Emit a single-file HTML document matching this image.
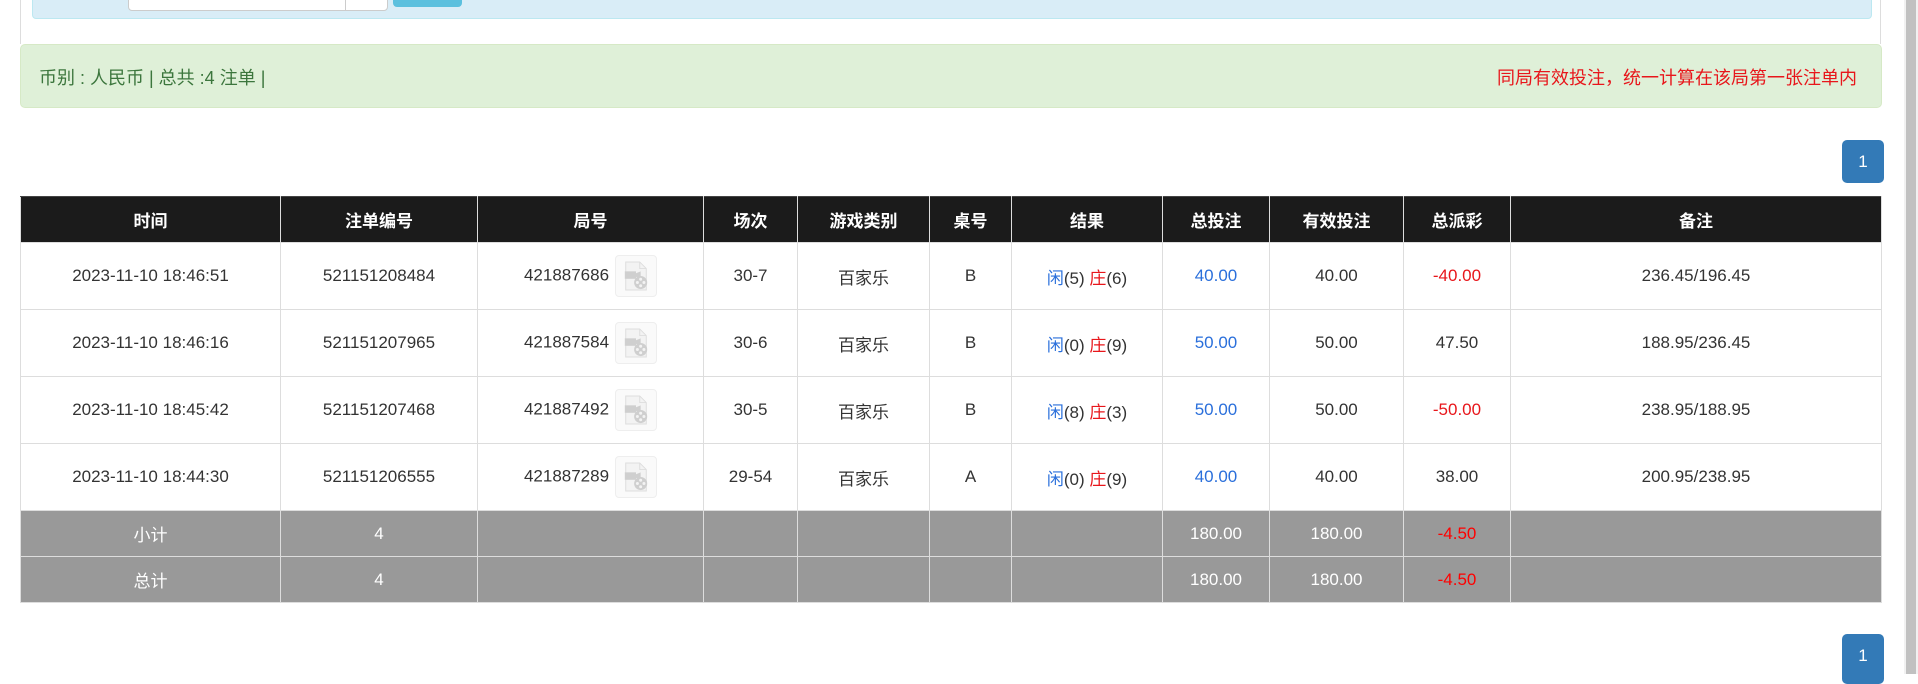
<!DOCTYPE html>
<html><head><meta charset="utf-8"><style>
body{margin:0;width:1918px;height:674px;overflow:hidden;background:#fff;font-family:"Liberation Sans","Noto Sans CJK SC",sans-serif;font-size:17px;color:#333;position:relative}
.abs{position:absolute}
table{position:absolute;left:20px;top:196px;width:1862px;border-collapse:collapse;table-layout:fixed}
td,th{border:1.5px solid #ddd;text-align:center;padding:0}
th{background:#1b1b1b;color:#fff;font-weight:bold;height:45px;border-color:#ddd;border-top:1px solid #444}
tr.r td{height:66px}
tr.s td{background:#999;color:#fff;height:45px;border-color:#ddd}
.b{color:#2a6fdb}.rd{color:#e8161b}
.ic{display:inline-block;width:42px;height:42px;border:1px solid #eee;border-radius:4px;vertical-align:middle;margin-left:6px;box-sizing:border-box;background:#fafafa}
.ic svg{display:block;margin:5px auto 0}
</style></head><body>
<div class="abs" style="left:20px;top:0;width:1px;height:44px;background:#ddd"></div>
<div class="abs" style="left:1880px;top:0;width:1px;height:44px;background:#ddd"></div>
<div class="abs" style="left:32px;top:-4px;width:1838px;height:21px;background:#d9edf7;border:1px solid #bce8f1;border-radius:4px"></div>
<div class="abs" style="left:128px;top:-4px;width:258px;height:13px;background:#fff;border:1px solid #ccc;border-radius:4px"></div>
<div class="abs" style="left:345px;top:-4px;width:1px;height:14px;background:#ccc"></div>
<div class="abs" style="left:393px;top:-4px;width:69px;height:11px;background:#5bc0de;border-radius:4px"></div>
<div class="abs" style="left:20px;top:44px;width:1862px;height:64px;background:#dff0d8;border:1px solid #d6e9c6;border-radius:5px;box-sizing:border-box"></div>
<div class="abs" style="left:39px;top:64px;color:#3c763d;font-size:18px">币别 : 人民币 | 总共 :4 注单 |</div>
<div class="abs" style="right:61px;top:64px;color:#e8161b;font-size:18px">同局有效投注，统一计算在该局第一张注单内</div>
<div class="abs" style="left:1842px;top:140px;width:42px;height:43px;background:#337ab7;border-radius:5px;color:#fff;text-align:center;line-height:43px">1</div>
<div class="abs" style="left:1842px;top:634px;width:42px;height:50px;background:#337ab7;border-radius:5px;color:#fff;text-align:center;line-height:43px">1</div>
<div class="abs" style="left:1904px;top:0;width:14px;height:674px;background:#f1f1f1"></div>
<div class="abs" style="left:1906px;top:0;width:10px;height:674px;background:#c1c1c1"></div>
<svg width="0" height="0" style="position:absolute"><defs><symbol id="f" viewBox="0 0 30 32"><path d="M4 1h15l7 7v23H4z" fill="#f3f3f3" stroke="#ddd"/><path d="M19 1v7h7" fill="none" stroke="#ddd"/><rect x="3" y="11" width="12" height="8" fill="#cfcfcf"/><path d="M15 13l5-2v8l-5-2z" fill="#cfcfcf"/><circle cx="20" cy="23" r="7" fill="#cfcfcf"/><circle cx="20" cy="19.5" r="1.6" fill="#f3f3f3"/><circle cx="20" cy="26.5" r="1.6" fill="#f3f3f3"/><circle cx="16.5" cy="23" r="1.6" fill="#f3f3f3"/><circle cx="23.5" cy="23" r="1.6" fill="#f3f3f3"/></symbol></defs></svg>
<table>
<colgroup><col style="width:260px"><col style="width:197px"><col style="width:226px"><col style="width:94px"><col style="width:132px"><col style="width:82px"><col style="width:151px"><col style="width:107px"><col style="width:134px"><col style="width:107px"><col></colgroup>
<tr><th>时间</th><th>注单编号</th><th>局号</th><th>场次</th><th>游戏类别</th><th>桌号</th><th>结果</th><th>总投注</th><th>有效投注</th><th>总派彩</th><th>备注</th></tr>
<tr class="r"><td>2023-11-10 18:46:51</td><td>521151208484</td><td>421887686<span class="ic"><svg width="28" height="30"><use href="#f"/></svg></span></td><td>30-7</td><td>百家乐</td><td>B</td><td><span class="b">闲</span>(5) <span class="rd">庄</span>(6)</td><td class="b">40.00</td><td>40.00</td><td class="rd">-40.00</td><td>236.45/196.45</td></tr>
<tr class="r"><td>2023-11-10 18:46:16</td><td>521151207965</td><td>421887584<span class="ic"><svg width="28" height="30"><use href="#f"/></svg></span></td><td>30-6</td><td>百家乐</td><td>B</td><td><span class="b">闲</span>(0) <span class="rd">庄</span>(9)</td><td class="b">50.00</td><td>50.00</td><td>47.50</td><td>188.95/236.45</td></tr>
<tr class="r"><td>2023-11-10 18:45:42</td><td>521151207468</td><td>421887492<span class="ic"><svg width="28" height="30"><use href="#f"/></svg></span></td><td>30-5</td><td>百家乐</td><td>B</td><td><span class="b">闲</span>(8) <span class="rd">庄</span>(3)</td><td class="b">50.00</td><td>50.00</td><td class="rd">-50.00</td><td>238.95/188.95</td></tr>
<tr class="r"><td>2023-11-10 18:44:30</td><td>521151206555</td><td>421887289<span class="ic"><svg width="28" height="30"><use href="#f"/></svg></span></td><td>29-54</td><td>百家乐</td><td>A</td><td><span class="b">闲</span>(0) <span class="rd">庄</span>(9)</td><td class="b">40.00</td><td>40.00</td><td>38.00</td><td>200.95/238.95</td></tr>
<tr class="s"><td>小计</td><td>4</td><td></td><td></td><td></td><td></td><td></td><td>180.00</td><td>180.00</td><td style="color:#f00">-4.50</td><td></td></tr>
<tr class="s"><td>总计</td><td>4</td><td></td><td></td><td></td><td></td><td></td><td>180.00</td><td>180.00</td><td style="color:#f00">-4.50</td><td></td></tr>
</table>
</body></html>
